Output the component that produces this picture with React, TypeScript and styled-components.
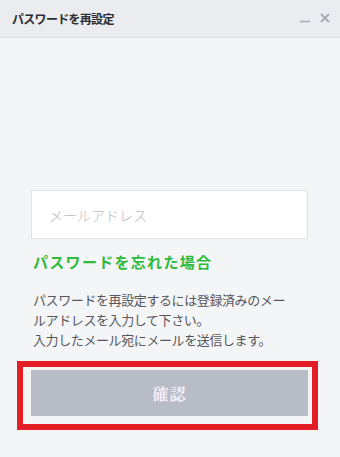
import styled, { createGlobalStyle } from 'styled-components'

const GlobalStyle = createGlobalStyle`
    html, body {
        margin: 0;
        padding: 0;
        background: #f4f5f7;
    }
    * {
        box-sizing: border-box;
    }
`

const JP = `'Noto Sans CJK JP', 'Noto Sans', sans-serif`

export default function App() {
    return (
        <>
            <GlobalStyle />
            <Window>
                <TitleBar>
                    <Title>パスワードを再設定</Title>
                    <WindowControls>
                        <ControlButton aria-label='minimize'>
                            <svg width='12' height='12' viewBox='0 0 12 12'>
                                <path d='M1 9.5h10' stroke='#a9adb5' strokeWidth='1.6' />
                            </svg>
                        </ControlButton>
                        <ControlButton aria-label='close'>
                            <svg width='12' height='12' viewBox='0 0 12 12'>
                                <path d='M2 2l8 8M10 2l-8 8' stroke='#a9adb5' strokeWidth='1.8' />
                            </svg>
                        </ControlButton>
                    </WindowControls>
                </TitleBar>
                <Content>
                    <EmailInput placeholder='メールアドレス' />
                    <ForgotLink>パスワードを忘れた場合</ForgotLink>
                    <Description>
                        パスワードを再設定するには登録済みのメー<br />
                        ルアドレスを入力して下さい。<br />
                        入力したメール宛にメールを送信します。
                    </Description>
                    <Highlight>
                        <ConfirmButton>確認</ConfirmButton>
                    </Highlight>
                </Content>
            </Window>
        </>
    )
}

const Window = styled.div`
    width: 340px;
    height: 457px;
    background: #f4f5f7;
    display: flex;
    flex-direction: column;
    font-family: ${JP};
`

const TitleBar = styled.div`
    height: 38px;
    flex-shrink: 0;
    display: flex;
    align-items: center;
    justify-content: space-between;
    padding: 0 8px 1px 12px;
    background: #eaecf0;
    border-bottom: 1px solid #dde0e5;
`

const Title = styled.h1`
    margin: 0;
    font-size: 12px;
    font-weight: 700;
    letter-spacing: -0.7px;
    color: #2b2d33;
`

const WindowControls = styled.div`
    display: flex;
    gap: 6px;
    align-items: center;
`

const ControlButton = styled.button`
    width: 14px;
    height: 14px;
    padding: 0;
    border: none;
    background: none;
    display: flex;
    align-items: center;
    justify-content: center;
    cursor: pointer;
`

const Content = styled.div`
    display: flex;
    flex-direction: column;
    padding: 152px 33px 0 31px;
`

const EmailInput = styled.input`
    width: 277px;
    height: 49px;
    padding: 0 17px;
    border: 1px solid #e0e2e6;
    background: #fff;
    font-family: ${JP};
    font-size: 14px;
    font-weight: 300;
    color: #333;
    outline: none;

    &::placeholder {
        color: #b9bbc0;
    }
`

const ForgotLink = styled.a`
    margin-top: 12px;
    padding-left: 2px;
    font-size: 15px;
    font-weight: 700;
    line-height: 22px;
    letter-spacing: 1.3px;
    color: #2fba3e;
    cursor: pointer;
`

const Description = styled.p`
    margin: 17px 0 0 2px;
    font-size: 13px;
    line-height: 20px;
    letter-spacing: -0.4px;
    color: #55575c;
`

const Highlight = styled.div`
    position: relative;
    margin-top: 20px;

    &::after {
        content: '';
        position: absolute;
        top: -9px;
        left: -14px;
        right: -11px;
        bottom: -14px;
        border: 6px solid #e31e27;
        pointer-events: none;
    }
`

const ConfirmButton = styled.button`
    width: 277px;
    height: 46px;
    border: none;
    background: #b8bcc7;
    color: #f6f2fa;
    font-family: 'Noto Serif CJK JP', 'Noto Sans CJK JP', serif;
    font-size: 16px;
    font-weight: 700;
    letter-spacing: 1px;
    cursor: pointer;
`
